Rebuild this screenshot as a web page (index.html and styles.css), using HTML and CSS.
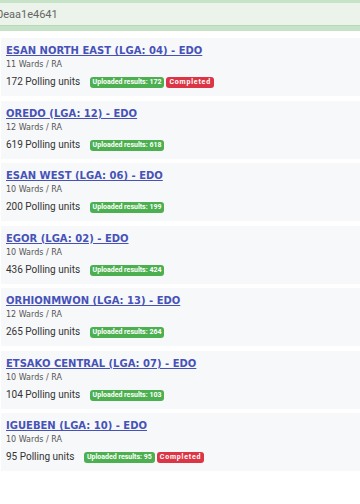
FILE: index.html
```html
<!DOCTYPE html>
<html lang="en">
<head>
	<meta charset="UTF-8">
	<title>LGA list</title>
	<link rel="stylesheet" href="styles.css">
</head>
<body>
	<div class="search">
		<span class="search-text">0eaa1e4641</span>
	</div>
	<ul class="lga-list">
		<li class="lga">
			<a href="#" class="lga-name">ESAN NORTH EAST (LGA: 04) - EDO</a>
			<div class="wards">11 Wards / RA</div>
			<div class="units">172 Polling units <span class="badge ok">Uploaded results: 172</span><span class="badge done">Completed</span></div>
		</li>
		<li class="lga">
			<a href="#" class="lga-name">OREDO (LGA: 12) - EDO</a>
			<div class="wards">12 Wards / RA</div>
			<div class="units">619 Polling units <span class="badge ok">Uploaded results: 618</span></div>
		</li>
		<li class="lga">
			<a href="#" class="lga-name">ESAN WEST (LGA: 06) - EDO</a>
			<div class="wards">10 Wards / RA</div>
			<div class="units">200 Polling units <span class="badge ok">Uploaded results: 199</span></div>
		</li>
		<li class="lga">
			<a href="#" class="lga-name">EGOR (LGA: 02) - EDO</a>
			<div class="wards">10 Wards / RA</div>
			<div class="units">436 Polling units <span class="badge ok">Uploaded results: 424</span></div>
		</li>
		<li class="lga">
			<a href="#" class="lga-name">ORHIONMWON (LGA: 13) - EDO</a>
			<div class="wards">12 Wards / RA</div>
			<div class="units">265 Polling units <span class="badge ok">Uploaded results: 264</span></div>
		</li>
		<li class="lga">
			<a href="#" class="lga-name">ETSAKO CENTRAL (LGA: 07) - EDO</a>
			<div class="wards">10 Wards / RA</div>
			<div class="units">104 Polling units <span class="badge ok">Uploaded results: 103</span></div>
		</li>
		<li class="lga">
			<a href="#" class="lga-name">IGUEBEN (LGA: 10) - EDO</a>
			<div class="wards">10 Wards / RA</div>
			<div class="units">95 Polling units <span class="badge ok">Uploaded results: 95</span><span class="badge done">Completed</span></div>
		</li>
	</ul>
</body>
</html>
```

FILE: styles.css
```css
body{margin:0;background:#fff;font-family:Roboto,"Liberation Sans",Arial,sans-serif;color:#333;}
ul{list-style:none;padding:0;margin:0;}

.search{height:23px;line-height:23px;background:#ebf3ea;border-top:3px solid #c6e2c7;border-bottom:5px solid #c6e2c7;box-shadow:inset 0 -1px 0 #b7d8b9;overflow:hidden;}
.search-text{display:block;margin-left:-3px;font-size:11px;color:#666;}

.lga-list{padding:7px 0 0 1px;}
.lga{background:#f7f8fa;height:48px;padding:6px 5px 4px 5px;margin-bottom:4.5px;}
.lga-name{display:block;font-family:"DejaVu Sans",Roboto,sans-serif;font-size:10px;line-height:14px;font-weight:bold;color:#4652b8;text-decoration:underline;}
.wards{font-family:"DejaVu Sans",Roboto,sans-serif;font-size:8px;line-height:14px;color:#555;}
.units{margin-top:2px;font-size:10px;line-height:16px;color:#333;}

.badge{display:inline-block;vertical-align:1px;margin-left:7px;padding:0 3px;height:11px;line-height:11px;font-size:7px;font-weight:bold;color:#fff;border-radius:3px;}
.badge + .badge{margin-left:2px;}
.badge.ok{background:#4caf50;}
.badge.done{background:#dc3545;letter-spacing:0.8px;}
```
